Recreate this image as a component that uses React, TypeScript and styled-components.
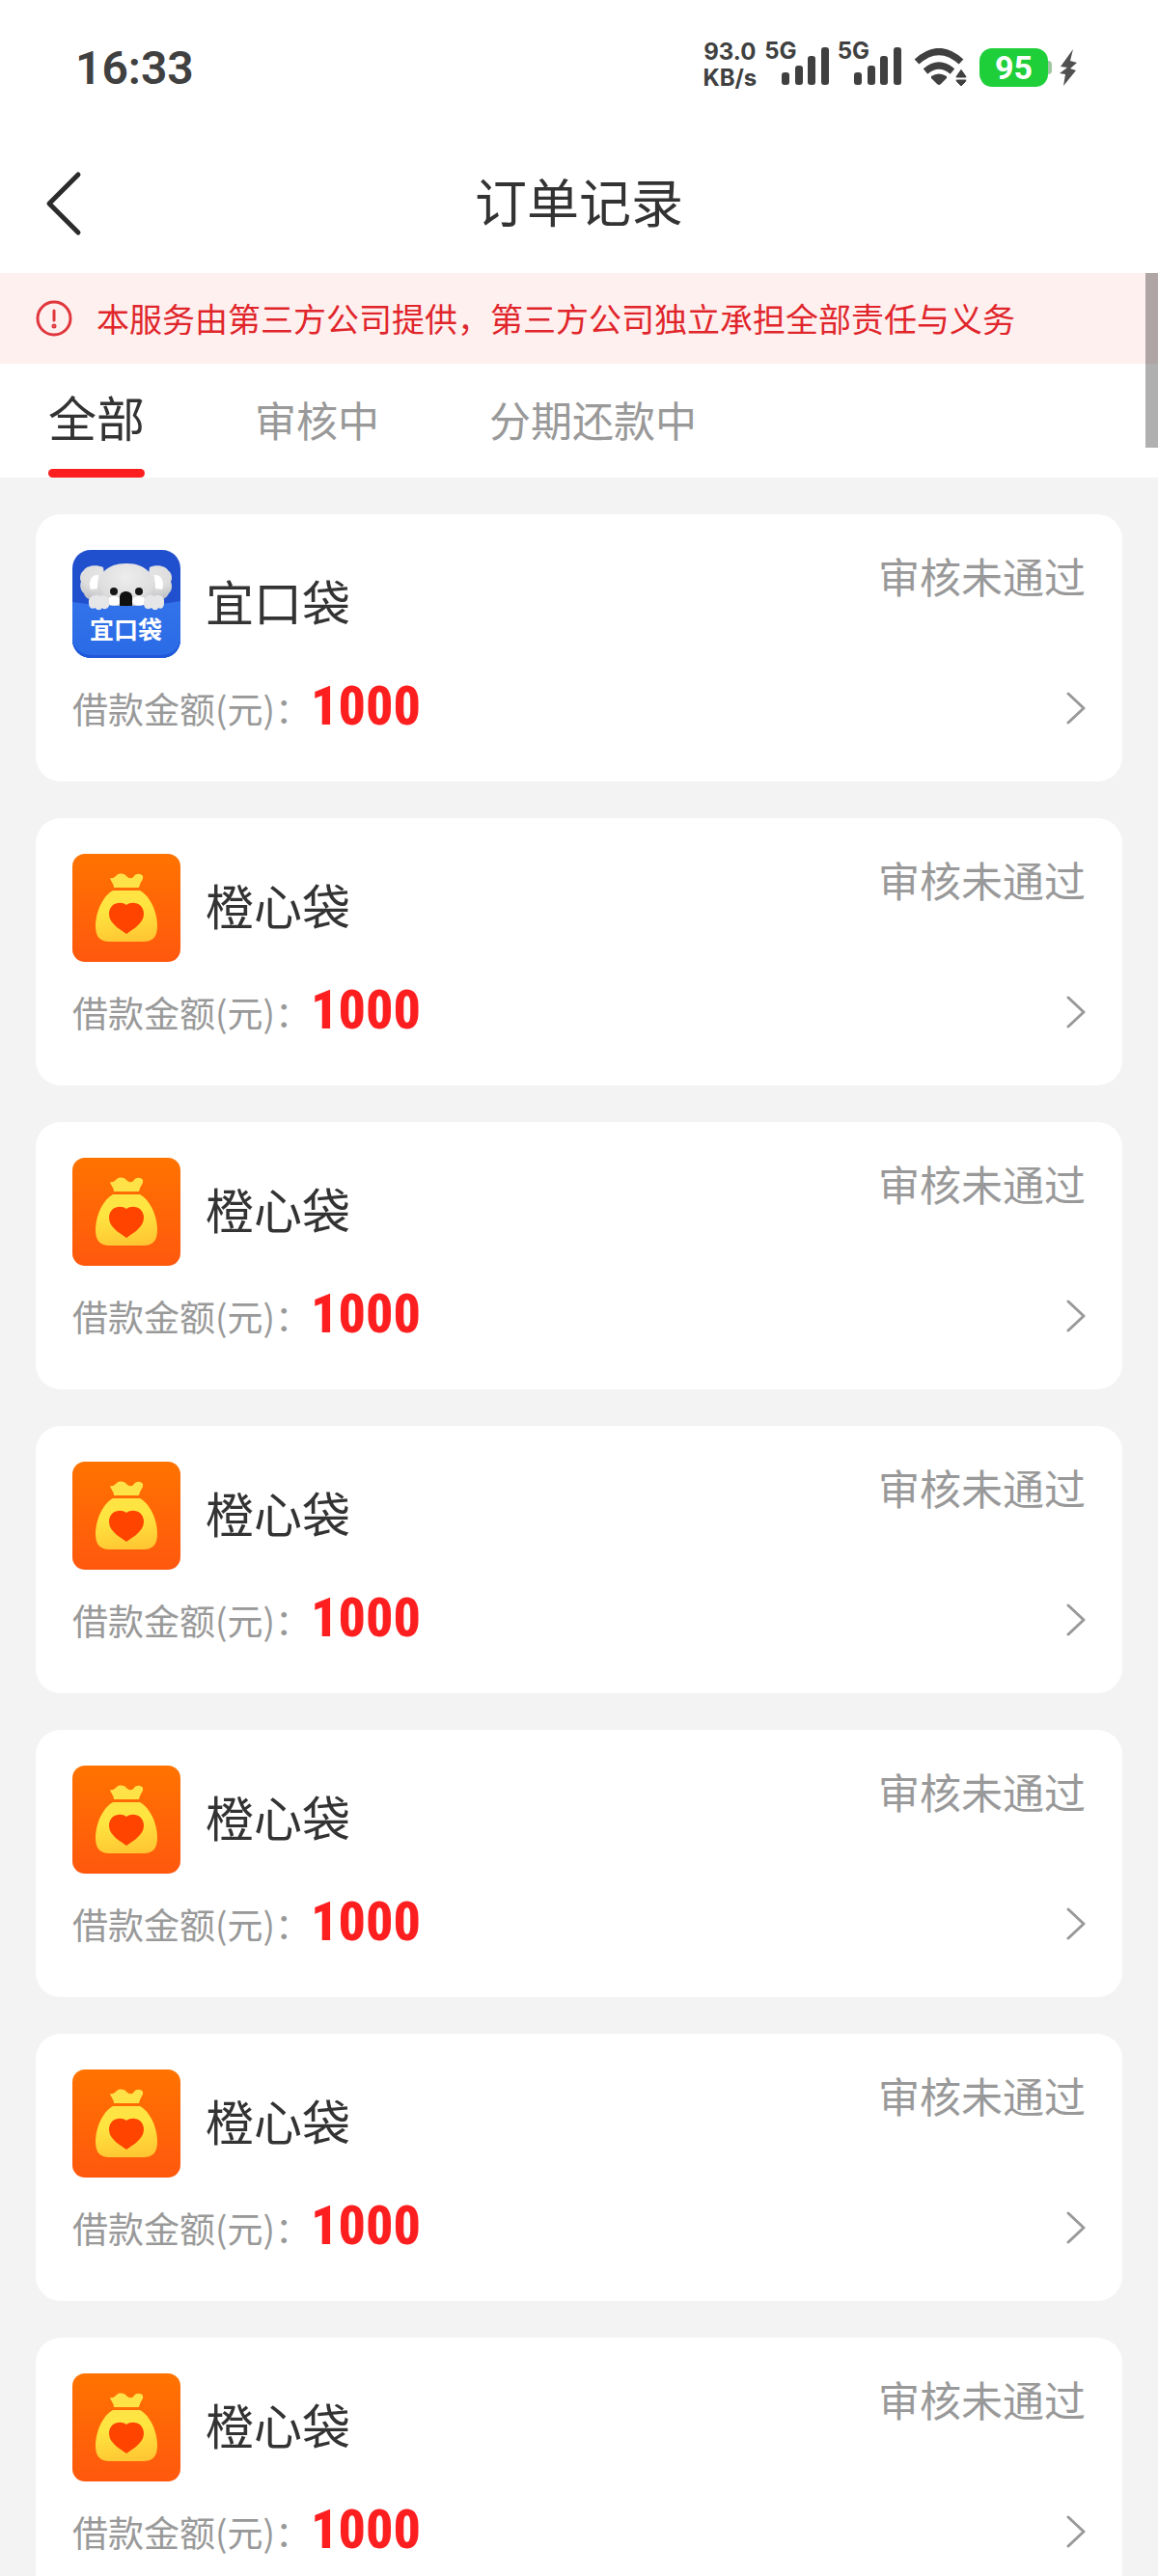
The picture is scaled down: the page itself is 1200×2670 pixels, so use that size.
import React, { useState } from "react";
import styled, { createGlobalStyle } from "styled-components";

const cjk = `"Noto Sans CJK SC", "Noto Sans", sans-serif`;
const latin = `Roboto, "Noto Sans", sans-serif`;
const wide = `Inter, Roboto, sans-serif`;

const GlobalStyle = createGlobalStyle`
  *, *::before, *::after { box-sizing: border-box; }
  body { margin: 0; background: #f3f3f3; font-family: ${cjk}; color: #333; }
  button { font: inherit; color: inherit; background: none; border: 0; padding: 0; cursor: pointer; }
  a { color: inherit; text-decoration: none; }
  h1, h2, p, ul { margin: 0; padding: 0; font-weight: 400; }
  svg { display: block; flex: none; }
`;

const Screen = styled.div`
  display: flex;
  flex-direction: column;
  height: 100vh;
  overflow: hidden;
`;

const StatusBar = styled.div`
  display: flex;
  align-items: center;
  justify-content: space-between;
  height: 139px;
  padding: 0 84px 0 78px;
  background: #fff;
  color: #404040;
  font-family: ${latin};
  font-weight: 700;
`;

const Clock = styled.time`
  padding-top: 2px;
  font-size: 48px;
  font-weight: 600;
  line-height: 60px;
`;

const StatusIcons = styled.div`
  display: flex;
  align-items: center;
  gap: 8px;
`;

const NetSpeed = styled.div`
  padding-bottom: 6px;
  font-family: ${wide};
  font-size: 24px;
  line-height: 27px;
  text-align: center;
`;

const SignalGroup = styled.div`
  display: flex;
  align-items: flex-end;
`;

const SignalLabel = styled.span`
  align-self: flex-start;
  margin-right: -16px;
  font-family: ${wide};
  font-size: 24px;
  line-height: 18px;
`;

const SignalSvg = styled.svg`
  margin: 5px 0 8px;
`;

const BatteryWrap = styled.div`
  display: flex;
  align-items: center;
  margin-left: 4px;
`;

const Battery = styled.div`
  width: 71px;
  height: 40px;
  border-radius: 13px;
  background: #1fcf3a;
  color: #fff;
  font-size: 34px;
  line-height: 41px;
  text-align: center;
`;

const BatteryTip = styled.div`
  width: 4px;
  height: 14px;
  border-radius: 0 4px 4px 0;
  background: #9fc7a4;
`;

const Header = styled.header`
  display: grid;
  grid-template-columns: 120px 1fr 120px;
  align-items: center;
  height: 144px;
  background: #fff;
`;

const BackButton = styled.button`
  display: flex;
  align-items: center;
  height: 100%;
  padding-left: 46px;
`;

const Title = styled.h1`
  padding-bottom: 6px;
  font-size: 54px;
  line-height: 72px;
  text-align: center;
`;

const Content = styled.main`
  position: relative;
  flex: 1;
  min-height: 0;
  overflow: hidden;
`;

const ScrollThumb = styled.div`
  position: absolute;
  top: 0;
  right: 0;
  width: 13px;
  height: 181px;
  background: rgba(0, 0, 0, 0.31);
`;

const Notice = styled.p`
  display: flex;
  align-items: center;
  gap: 25px;
  height: 94px;
  padding: 0 37px;
  background: #fff0f0;
  color: #e0262b;
  font-size: 34px;
  line-height: 48px;
`;

const Tabs = styled.div`
  display: flex;
  gap: 114px;
  height: 118px;
  padding: 0 50px;
  background: #fff;
`;

const Tab = styled.button<{ $active: boolean }>`
  display: flex;
  flex-direction: column;
  justify-content: space-between;
  padding-top: 20px;
  font-size: ${(p) => (p.$active ? 50 : 43)}px;
  line-height: ${(p) => (p.$active ? 68 : 74)}px;
  color: ${(p) => (p.$active ? "#333" : "#999")};

  &::after {
    content: "";
    width: 100%;
    height: 9px;
    border-radius: 5px;
    background: ${(p) => (p.$active ? "#fd1f20" : "transparent")};
  }
`;

const OrderList = styled.ul`
  display: flex;
  flex-direction: column;
  gap: 38px;
  padding: 38px 37px;
  list-style: none;
`;

const Card = styled.a`
  display: block;
  padding: 37px 38px 34px;
  border-radius: 26px;
  background: #fff;
`;

const CardTop = styled.div`
  display: flex;
  align-items: center;
  gap: 26px;
`;

const Name = styled.h2`
  flex: 1;
  padding-bottom: 8px;
  font-size: 50px;
  line-height: 72px;
`;

const State = styled.span`
  align-self: flex-start;
  font-size: 43px;
  line-height: 52px;
  color: #999;
`;

const AmountRow = styled.div`
  display: flex;
  align-items: center;
  height: 94px;
  padding-top: 10px;
`;

const AmountLabel = styled.span`
  font-size: 37px;
  line-height: 56px;
  color: #999;
`;

const Amount = styled.strong`
  flex: 1;
  padding-bottom: 4px;
  font-family: "Roboto Condensed", Roboto, sans-serif;
  font-size: 56px;
  font-weight: 800;
  line-height: 64px;
  color: #fd1f20;
`;

function Signal() {
  return (
    <SignalGroup>
      <SignalLabel>5G</SignalLabel>
      <SignalSvg width="50" height="39" viewBox="0 0 50 39" fill="#404040" aria-hidden="true">
        <rect x="0" y="26" width="8" height="13" rx="3" />
        <rect x="14" y="19" width="8" height="20" rx="3" />
        <rect x="27" y="9" width="8" height="30" rx="3" />
        <rect x="41" y="0" width="8" height="39" rx="3" />
      </SignalSvg>
    </SignalGroup>
  );
}

const WifiSvg = styled.svg`
  margin-left: 4px;
`;

function WifiIcon() {
  return (
    <WifiSvg width="56" height="40" viewBox="0 0 56 40" aria-hidden="true">
      <g fill="none" stroke="#404040" strokeWidth="7">
        <path d="M3 14Q26 -7 49 14" />
        <path d="M12 24Q26 12 40 24" />
      </g>
      <path d="M18 29Q26 24 34 29L34 31L28 37Q26 39 24 37L18 31Z" fill="#404040" />
      <path
        d="M49 21L54 28Q56 31 53 31H45Q42 31 44 28ZM49 40L54 35Q56 32 53 32H45Q42 32 44 35Z"
        fill="#404040"
        stroke="#fff"
        strokeWidth="1"
      />
    </WifiSvg>
  );
}

function KoalaLogo() {
  return (
    <svg width="112" height="112" viewBox="0 0 112 112" aria-hidden="true">
      <defs>
        <radialGradient id="fur" cx="0.5" cy="0.3" r="0.75">
          <stop offset="0" stopColor="#ededed" />
          <stop offset="0.65" stopColor="#dedede" />
          <stop offset="1" stopColor="#bfc0c4" />
        </radialGradient>
        <linearGradient id="pocket" x1="0" y1="0" x2="0" y2="1">
          <stop offset="0" stopColor="#3273ea" />
          <stop offset="1" stopColor="#2a6be6" />
        </linearGradient>
        <clipPath id="tile">
          <rect width="112" height="112" rx="19" />
        </clipPath>
      </defs>
      <g clipPath="url(#tile)">
        <rect width="112" height="112" fill="#2150cf" />
        <path
          d="M32 18C25 15 15 16 12 21C8 24 7 29 9 33C7 37 9 43 12 45C13 50 19 53 25 52L36 46ZM80 18C86 15 96 16 99 21C103 24 104 29 102 33C104 37 103 43 100 45C98 50 92 53 86 52L76 46Z"
          fill="url(#fur)"
        />
        <path d="M27 26C20 25 16 33 19 41L26 40ZM85 26C92 25 96 33 93 41L86 40Z" fill="#fff" />
        <path d="M55 14C75 13 86 26 86 40C86 52 78 60 56 60C34 60 26 52 26 40C26 26 36 14 55 14Z" fill="url(#fur)" />
        <ellipse cx="43" cy="53" rx="7" ry="5" fill="#fff" />
        <ellipse cx="69" cy="53" rx="7" ry="5" fill="#fff" />
        <circle cx="43" cy="43" r="4" fill="#161616" />
        <circle cx="69" cy="43" r="4" fill="#161616" />
        <path d="M49 60V49C49 41 62 41 62 49V60Z" fill="#111" />
        <path d="M0 54Q26 58 56 58T112 53V112H0Z" fill="url(#pocket)" />
        <path d="M0 94Q4 108 20 109H92Q108 108 112 94V112H0Z" fill="#1f58d8" />
        <path
          d="M17 55C16 48 24 45 29 48C35 45 40 50 38 58C36 62 32 62 31 60C29 63 25 63 24 60C20 62 17 60 17 55ZM74 55C74 48 80 45 85 48C90 45 96 48 95 55C95 60 92 62 89 60C88 63 84 63 82 60C79 62 74 62 74 55Z"
          fill="#e6e6e8"
        />
        <text x="18" y="92" fontFamily={cjk} fontSize="25" fontWeight="700" fill="#fff">
          宜口袋
        </text>
      </g>
    </svg>
  );
}

function MoneyBagLogo() {
  return (
    <svg width="112" height="112" viewBox="0 0 112 112" aria-hidden="true">
      <defs>
        <linearGradient id="orange" x1="0" y1="0" x2="0" y2="1">
          <stop offset="0" stopColor="#ff7300" />
          <stop offset="1" stopColor="#ff580e" />
        </linearGradient>
        <linearGradient id="gold" gradientUnits="userSpaceOnUse" x1="50" y1="20" x2="60" y2="92">
          <stop offset="0" stopColor="#ffe14a" />
          <stop offset="0.5" stopColor="#ffe540" />
          <stop offset="1" stopColor="#ffc532" />
        </linearGradient>
      </defs>
      <rect width="112" height="112" rx="13" fill="url(#orange)" />
      <path
        d="M39 25C42 26 44 24 46 22C49 20 53 20 56 23C59 26 62 26 64 23C66 20 71 20 73 23C74 27 70 29 69 35H43C43 31 40 29 39 25Z"
        fill="url(#gold)"
      />
      <path d="M42 38H70C81 44 88 61 88 75C88 86 83 91 74 91H38C29 91 24 86 24 75C24 61 31 44 42 38Z" fill="url(#gold)" />
      <path d="M56 53C62 48 74 51 74 62C74 69 69 73 66 76L56 83L46 76C43 73 38 69 38 62C38 51 50 48 56 53Z" fill="#ff4400" />
    </svg>
  );
}

const tabs = ["全部", "审核中", "分期还款中"];

const orders = [
  { id: 1, name: "宜口袋", amount: 1000, logo: "koala" },
  { id: 2, name: "橙心袋", amount: 1000, logo: "bag" },
  { id: 3, name: "橙心袋", amount: 1000, logo: "bag" },
  { id: 4, name: "橙心袋", amount: 1000, logo: "bag" },
  { id: 5, name: "橙心袋", amount: 1000, logo: "bag" },
  { id: 6, name: "橙心袋", amount: 1000, logo: "bag" },
  { id: 7, name: "橙心袋", amount: 1000, logo: "bag" },
];

export default function App() {
  const [active, setActive] = useState(0);
  return (
    <Screen>
      <GlobalStyle />
      <StatusBar>
        <Clock>16:33</Clock>
        <StatusIcons>
          <NetSpeed>
            93.0
            <br />
            KB/s
          </NetSpeed>
          <Signal />
          <Signal />
          <WifiIcon />
          <BatteryWrap>
            <Battery>95</Battery>
            <BatteryTip />
          </BatteryWrap>
          <svg width="18" height="38" viewBox="0 0 18 38" fill="#505050" aria-hidden="true">
            <path d="M14 0L1 18L8 19L0 25L6 26L4 38L17 22L11 20L18 14L11 12Z" />
          </svg>
        </StatusIcons>
      </StatusBar>
      <Header>
        <BackButton aria-label="返回">
          <svg width="40" height="68" viewBox="0 0 40 68" fill="none" stroke="#2b2b2b" strokeWidth="5" strokeLinecap="round" strokeLinejoin="round">
            <path d="M35 4L5 34L35 64" />
          </svg>
        </BackButton>
        <Title>订单记录</Title>
      </Header>
      <Content>
        <Notice>
          <svg width="38" height="38" viewBox="0 0 38 38" fill="none" stroke="#e0363c" strokeWidth="3" strokeLinecap="round" aria-hidden="true">
            <circle cx="19" cy="19" r="17" />
            <path d="M19 11V21" />
            <circle cx="19" cy="27" r="1" />
          </svg>
          本服务由第三方公司提供，第三方公司独立承担全部责任与义务
        </Notice>
        <Tabs role="tablist">
          {tabs.map((label, i) => (
            <Tab key={label} role="tab" aria-selected={i === active} $active={i === active} onClick={() => setActive(i)}>
              {label}
            </Tab>
          ))}
        </Tabs>
        <OrderList>
          {orders.map((order) => (
            <li key={order.id}>
              <Card href={`#order-${order.id}`}>
                <CardTop>
                  {order.logo === "koala" ? <KoalaLogo /> : <MoneyBagLogo />}
                  <Name>{order.name}</Name>
                  <State>审核未通过</State>
                </CardTop>
                <AmountRow>
                  <AmountLabel>借款金额(元)：</AmountLabel>
                  <Amount>{order.amount}</Amount>
                  <svg width="22" height="34" viewBox="0 0 22 34" fill="none" stroke="#999" strokeWidth="3" strokeLinecap="round" strokeLinejoin="round" aria-hidden="true">
                    <path d="M4 2L20 17L4 32" />
                  </svg>
                </AmountRow>
              </Card>
            </li>
          ))}
        </OrderList>
        <ScrollThumb />
      </Content>
    </Screen>
  );
}
